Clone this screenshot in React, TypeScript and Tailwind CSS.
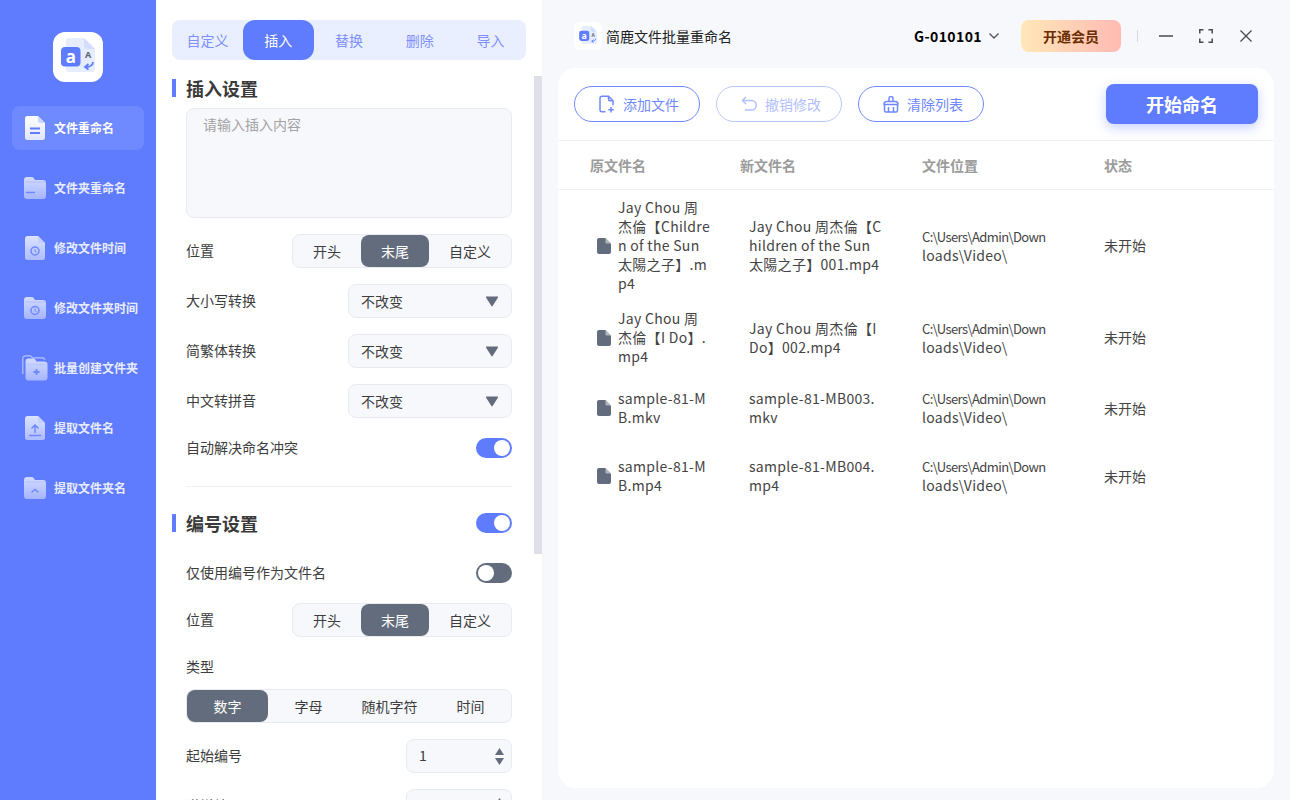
import React from "react";

const FONT = "font-['Noto_Sans_CJK_SC','Noto_Sans',sans-serif]";

function LogoMark({ size }: { size: number }) {
  return (
    <svg width={size} height={size} viewBox="0 0 50 50">
      <path d="M13 9a3 3 0 0 1 3-3h15l11 11v20a3 3 0 0 1-3 3H16a3 3 0 0 1-3-3z" fill="#e6edff" />
      <path d="M31 6l11 11H34a3 3 0 0 1-3-3z" fill="#d3deff" />
      <rect x="8" y="15" width="19.500" height="19.500" rx="4" fill="#5f7cff" />
      <text x="17.800" y="31" textAnchor="middle" fontSize="17" fontWeight="700" fill="#fff" fontFamily="Noto Sans">a</text>
      <text x="35" y="26" textAnchor="middle" fontSize="9" fontWeight="700" fill="#5d6679" fontFamily="Noto Sans">A</text>
      <path d="M40 30c-.3 3.500-3 5-7.500 5.200M35.500 32l-3.500 3 3.500 2.600" fill="none" stroke="#5f7cff" strokeWidth="1.800" />
    </svg>
  );
}

function DocIcon({ children }: { children?: React.ReactNode }) {
  return (
    <svg width="20" height="24" viewBox="0 0 20 24">
      <defs>
        <linearGradient id="docG" x1="0" y1="0" x2="0" y2="1">
          <stop offset="0" stopColor="#dbe3ff" />
          <stop offset="1" stopColor="#aebcff" />
        </linearGradient>
      </defs>
      <path d="M0 2.500A2.500 2.500 0 0 1 2.500 0H13l7 7v14.500a2.500 2.500 0 0 1-2.500 2.500h-15A2.500 2.500 0 0 1 0 21.500z" fill="url(#docG)" />
      <path d="M13 0l7 7h-5a2 2 0 0 1-2-2z" fill="#c3cfff" />
      {children}
    </svg>
  );
}

function FolderIcon({ children }: { children?: React.ReactNode }) {
  return (
    <svg width="22" height="22" viewBox="0 0 22 22">
      <defs>
        <linearGradient id="folG" x1="0" y1="0" x2="0" y2="1">
          <stop offset="0" stopColor="#d3dcff" />
          <stop offset="1" stopColor="#a5b5ff" />
        </linearGradient>
      </defs>
      <path d="M0 3a3 3 0 0 1 3-3h4.500a3 3 0 0 1 2.200 1l1.300 2h8a3 3 0 0 1 3 3v13a3 3 0 0 1-3 3H3a3 3 0 0 1-3-3z" fill="url(#folG)" />
      <path d="M2 5h18" stroke="#b9c6ff" strokeWidth="1.500" strokeLinecap="round" />
      {children}
    </svg>
  );
}

const clock = (cx: number, cy: number) => (
  <g fill="none" stroke="#6f88ff" strokeWidth="1.500">
    <circle cx={cx} cy={cy} r="4" />
    <path d={`M${cx} ${cy - 2}v2.200l1.500 1`} strokeWidth="1" />
  </g>
);

const menu: { label: string; icon: React.ReactNode; active?: boolean }[] = [
  {
    label: "文件重命名",
    active: true,
    icon: (
      <svg width="20" height="24" viewBox="0 0 20 24">
        <defs>
          <linearGradient id="docW" x1="0" y1="0" x2="0" y2="1">
            <stop offset="0" stopColor="#ffffff" />
            <stop offset="1" stopColor="#dfe5ff" />
          </linearGradient>
        </defs>
        <path d="M0 2.500A2.500 2.500 0 0 1 2.500 0H13l7 7v14.500a2.500 2.500 0 0 1-2.500 2.500h-15A2.500 2.500 0 0 1 0 21.500z" fill="url(#docW)" />
        <path d="M13 0l7 7h-5a2 2 0 0 1-2-2z" fill="#ccd6ff" />
        <path d="M5 12.500h10M5 17h10" stroke="#5f7cff" strokeWidth="1.800" />
      </svg>
    ),
  },
  { label: "文件夹重命名", icon: <FolderIcon><path d="M2.500 15.500h8" stroke="#6f88ff" strokeWidth="1.300" strokeLinecap="round" /></FolderIcon> },
  { label: "修改文件时间", icon: <DocIcon>{clock(10, 15)}</DocIcon> },
  { label: "修改文件夹时间", icon: <FolderIcon>{clock(11, 13.500)}</FolderIcon> },
  {
    label: "批量创建文件夹",
    icon: (
      <svg width="26" height="26" viewBox="0 0 26 26">
        <path d="M.8 19V3.500A2.700 2.700 0 0 1 3.500.8h5l2 2h9.500a3 3 0 0 1 3 2" fill="none" stroke="#b4c2ff" strokeWidth="1.200" />
        <g transform="translate(3.500 3.500)">
          <path d="M0 3a3 3 0 0 1 3-3h4.500a3 3 0 0 1 2.200 1l1.300 2h8a3 3 0 0 1 3 3v13a3 3 0 0 1-3 3H3a3 3 0 0 1-3-3z" fill="url(#folG)" />
          <path d="M2 6h18" stroke="#b9c6ff" strokeWidth="1.500" strokeLinecap="round" />
          <path d="M11 10.500v6M8 13.500h6" stroke="#6f88ff" strokeWidth="1.800" />
        </g>
      </svg>
    ),
  },
  { label: "提取文件名", icon: <DocIcon><path d="M10 16.500v-7M7 12l3-3 3 3M4.500 19.500h11" fill="none" stroke="#6f88ff" strokeWidth="1.500" strokeLinecap="round" /></DocIcon> },
  { label: "提取文件夹名", icon: <FolderIcon><path d="M8 15l3-2.500 3 2.500" fill="none" stroke="#6f88ff" strokeWidth="1.500" strokeLinecap="round" /></FolderIcon> },
];

function Segment({ items, active, className }: { items: { t: string; w: string }[]; active: number; className: string }) {
  return (
    <div className={`flex h-[34px] items-stretch rounded-lg border border-[#e9ebf2] bg-[#f7f8fc] text-sm text-[#3d3d3d] ${className}`}>
      {items.map((it, i) => (
        <div
          key={it.t}
          className={`flex items-center justify-center ${it.w} ${i === active ? "rounded-lg bg-[#636c7c] text-white" : ""}`}
        >
          {it.t}
        </div>
      ))}
    </div>
  );
}

const posItems = [
  { t: "开头", w: "w-[68px]" },
  { t: "末尾", w: "w-[68px]" },
  { t: "自定义", w: "flex-1" },
];
const typeItems = [
  { t: "数字", w: "w-[81px]" },
  { t: "字母", w: "w-[81px]" },
  { t: "随机字符", w: "w-[81px]" },
  { t: "时间", w: "w-[81px]" },
];

function Toggle({ on }: { on: boolean }) {
  return (
    <div className={`flex h-5 w-9 items-center rounded-full px-0.5 ${on ? "justify-end bg-[#5f7cff]" : "justify-start bg-[#636c7c]"}`}>
      <div className="size-4 rounded-full bg-white" />
    </div>
  );
}

function SectionTitle({ children }: { children: React.ReactNode }) {
  return (
    <div className="flex items-center gap-2.5">
      <div className="h-[18px] w-1 bg-[#5f7cff]" />
      <div className="text-[18px] font-bold leading-[18px] text-[#3a3a3a]">{children}</div>
    </div>
  );
}

function Label({ children }: { children: React.ReactNode }) {
  return <span className="pb-0.5 text-sm text-[#3d3d3d]">{children}</span>;
}

function SelectRow({ label }: { label: string }) {
  return (
    <div className="flex h-[34px] items-center justify-between pl-3.5">
      <Label>{label}</Label>
      <div className="flex h-[34px] w-[164px] items-center justify-between rounded-lg border border-[#e9ebf2] bg-[#f7f8fc] pl-3 pr-3 text-sm text-[#3d3d3d]">
        <span>不改变</span>
        <svg width="14" height="11" viewBox="0 0 14 11"><path d="M1 1.500a.7.7 0 0 1 .6-1h10.800a.7.7 0 0 1 .6 1L7.600 10a.7.7 0 0 1-1.200 0z" fill="#636c7c" /></svg>
      </div>
    </div>
  );
}

function NumberRow({ label, value }: { label: string; value: string }) {
  return (
    <div className="flex h-[34px] items-center justify-between pl-3.5">
      <Label>{label}</Label>
      <div className="flex h-[34px] w-[106px] items-center justify-between rounded-lg border border-[#e9ebf2] bg-[#f7f8fc] pl-3 pr-[7px] text-sm text-[#3d3d3d]">
        <span className="pb-0.5">{value}</span>
        <div className="flex flex-col gap-[3px]">
          <svg width="9" height="7" viewBox="0 0 9 7"><path d="M4.500 0L9 7H0z" fill="#636c7c" /></svg>
          <svg width="9" height="7" viewBox="0 0 9 7"><path d="M4.500 7L9 0H0z" fill="#636c7c" /></svg>
        </div>
      </div>
    </div>
  );
}

function Pill({ children, icon, muted }: { children: React.ReactNode; icon: React.ReactNode; muted?: boolean }) {
  return (
    <div className={`flex h-9 w-[126px] items-center justify-center gap-2 rounded-full border pl-1 text-sm ${muted ? "border-[#b9c6ff] text-[#b3c0ff]" : "border-[#6f88ff] text-[#6f88ff]"}`}>
      {icon}
      <span>{children}</span>
    </div>
  );
}

const rows = [
  { name: "Jay Chou 周杰倫【Children of the Sun 太陽之子】.mp4", next: "Jay Chou 周杰倫【Children of the Sun 太陽之子】001.mp4" },
  { name: "Jay Chou 周杰倫【I Do】.mp4", next: "Jay Chou 周杰倫【I Do】002.mp4" },
  { name: "sample-81-MB.mkv", next: "sample-81-MB003.mkv" },
  { name: "sample-81-MB.mp4", next: "sample-81-MB004.mp4" },
];

export default function App() {
  return (
    <div className={`flex h-[800px] w-[1290px] overflow-hidden bg-[#f7f8fc] ${FONT}`}>
      <aside className="flex w-[156px] shrink-0 flex-col items-center bg-[#5f7cff]">
        <div className="mt-8 flex size-[50px] items-center justify-center rounded-xl bg-white">
          <LogoMark size={50} />
        </div>
        <nav className="mt-6 flex w-full flex-col gap-4 px-3">
          {menu.map((m) => (
            <div
              key={m.label}
              className={`flex h-11 items-center rounded-lg ${m.active ? "bg-white/10 text-white" : "text-[#e8ecff]"}`}
            >
              <div className="flex w-[42px] shrink-0 items-center justify-center pl-[3px]">{m.icon}</div>
              <span className="whitespace-nowrap text-xs font-bold">{m.label}</span>
            </div>
          ))}
        </nav>
      </aside>

      <section className="relative h-full w-[386px] shrink-0 overflow-hidden bg-white pl-4 pr-4 pt-5">
        <div className="flex h-10 w-[354px] items-stretch rounded-lg bg-[#e9efff] text-sm text-[#7f8fff]">
          {["自定义", "插入", "替换", "删除", "导入"].map((t, i) => (
            <div key={t} className={`flex w-[71px] items-center justify-center ${i === 1 ? "rounded-xl bg-[#5f7cff] text-white" : ""}`}>
              {t}
            </div>
          ))}
        </div>
        <div className="absolute right-0 top-[76px] h-[478px] w-2 bg-[#dfdfe9]" />

        <div className="mt-[19px] w-[340px]">
          <SectionTitle>插入设置</SectionTitle>
          <div className="ml-3.5 mt-[11px] h-[110px] rounded-lg border border-[#e9ebf2] bg-[#f7f8fc] px-4 py-[5px] text-sm text-[#a3a3a3]">请输入插入内容</div>

          <div className="mt-4 flex h-[34px] items-center justify-between pl-3.5">
            <Label>位置</Label>
            <Segment items={posItems} active={1} className="w-[220px]" />
          </div>
          <div className="mt-4 flex flex-col gap-4">
            <SelectRow label="大小写转换" />
            <SelectRow label="简繁体转换" />
            <SelectRow label="中文转拼音" />
          </div>
          <div className="mt-5 flex h-5 items-center justify-between pl-3.5">
            <Label>自动解决命名冲突</Label>
            <Toggle on />
          </div>
          <div className="ml-3.5 mt-7 h-px bg-[#eff0f4]" />

          <div className="mt-[26px] flex h-5 items-center justify-between">
            <SectionTitle>编号设置</SectionTitle>
            <Toggle on />
          </div>
          <div className="mt-[30px] flex h-5 items-center justify-between pl-3.5">
            <Label>仅使用编号作为文件名</Label>
            <Toggle on={false} />
          </div>
          <div className="mt-5 flex h-[34px] items-center justify-between pl-3.5">
            <Label>位置</Label>
            <Segment items={posItems} active={1} className="w-[220px]" />
          </div>
          <div className="ml-3.5 mt-[19px] pb-px text-sm leading-[20px] text-[#3d3d3d]">类型</div>
          <div className="ml-3.5 mt-3">
            <Segment items={typeItems} active={0} className="w-[326px]" />
          </div>
          <div className="mt-4 flex flex-col gap-4">
            <NumberRow label="起始编号" value="1" />
            <NumberRow label="递增编号" value="1" />
          </div>
        </div>
      </section>

      <main className="flex min-w-0 flex-1 flex-col pl-4 pr-4">
        <header className="flex h-[68px] shrink-0 items-center pl-4 pr-[22px] pt-1">
          <div className="flex size-7 items-center justify-center rounded-md bg-white">
            <LogoMark size={26} />
          </div>
          <span className="ml-1 text-sm text-[#222]">简鹿文件批量重命名</span>
          <span className="ml-auto text-sm font-bold tracking-[0.4px] text-black">G-010101</span>
          <svg className="ml-[6px]" width="12" height="8" viewBox="0 0 12 8"><path d="M1.500 1.500L6 6l4.500-4.500" fill="none" stroke="#555" strokeWidth="1.400" /></svg>
          <div className="ml-[21px] flex h-8 w-[100px] items-center justify-center rounded-lg bg-gradient-to-r from-[#ffe7b8] to-[#ffbab3] text-sm font-bold text-[#6b2e00]">开通会员</div>
          <div className="ml-4 h-3 w-px bg-[#d8d8d8]" />
          <svg className="ml-[21px]" width="14" height="14" viewBox="0 0 14 14"><path d="M0 7h14" stroke="#4a4a4a" strokeWidth="1.500" /></svg>
          <svg className="ml-[26px]" width="14" height="14" viewBox="0 0 14 14"><path d="M.8 4.500V.8h3.700M9.500.8h3.700v3.700M13.200 9.500v3.700H9.500M4.500 13.200H.8V9.500" fill="none" stroke="#4a4a4a" strokeWidth="1.500" /></svg>
          <svg className="ml-[27px]" width="12" height="12" viewBox="0 0 12 12"><path d="M.5.500l11 11M11.500.500l-11 11" fill="none" stroke="#4a4a4a" strokeWidth="1.300" /></svg>
        </header>

        <div className="flex h-[720px] flex-col overflow-hidden rounded-[18px] bg-white">
          <div className="flex h-[73px] shrink-0 items-center border-b border-[#eff0f4] px-4">
            <div className="flex gap-4">
              <Pill icon={<svg width="16" height="18" viewBox="0 0 16 18"><path d="M6.500 16.800H3A2 2 0 0 1 1 14.800V3.200a2 2 0 0 1 2-2h6.500L14 5.700v4.500M9.500 1.200v3a1.500 1.500 0 0 0 1.500 1.500h3M12 12v5.500M9.300 14.700h5.500" fill="none" stroke="#6f88ff" strokeWidth="1.500" /></svg>}>添加文件</Pill>
              <Pill muted icon={<svg width="16" height="16" viewBox="0 0 16 16"><path d="M5 1L1.500 4.500 5 8M1.500 4.500h9a4 4 0 0 1 0 9.500H4" fill="none" stroke="#b3c0ff" strokeWidth="1.500" /></svg>}>撤销修改</Pill>
              <Pill icon={<svg width="16" height="17" viewBox="0 0 16 17"><path d="M1.500 8.500h13v6a1.500 1.500 0 0 1-1.500 1.500H3a1.500 1.500 0 0 1-1.500-1.500zM1 8.500a2.500 2.500 0 0 1 2.500-3h9a2.500 2.500 0 0 1 2.500 3M6 5.500v-3a2 2 0 0 1 4 0v3M5.500 11v5M10.500 11v5" fill="none" stroke="#6f88ff" strokeWidth="1.500" /></svg>}>清除列表</Pill>
            </div>
            <div className="ml-auto flex h-10 w-[152px] items-center justify-center rounded-lg bg-[#5f7cff] text-[18px] font-bold text-white shadow-[0_4px_12px_rgba(95,124,255,0.35)]">开始命名</div>
          </div>

          <div className="grid h-[49px] shrink-0 grid-cols-[150px_182px_182px_1fr] items-center border-b border-[#eff0f4] pl-8 text-sm font-bold text-[#9b9b9b]">
            <span>原文件名</span>
            <span>新文件名</span>
            <span>文件位置</span>
            <span>状态</span>
          </div>

          {rows.map((r) => (
            <div key={r.name} className="grid min-h-[68px] grid-cols-[150px_182px_182px_1fr] items-center py-2 pl-8 text-sm leading-[19px] tracking-[0.3px] text-[#444]">
              <div className="flex items-center">
                <svg className="ml-[7px] shrink-0" width="14" height="16" viewBox="0 0 14 16"><path d="M0 2a2 2 0 0 1 2-2h6.500L14 5.500V14a2 2 0 0 1-2 2H2a2 2 0 0 1-2-2z" fill="#636c7c" /><path d="M8.500 0L14 5.500H9.500a1 1 0 0 1-1-1z" fill="#fff" fillOpacity="0.5" /></svg>
                <span className="ml-[7px] w-[93px] break-all">{r.name}</span>
              </div>
              <span className="ml-[9px] w-[134px] break-all">{r.next}</span>
              <div className="whitespace-nowrap">
                <span className="block text-[13px] tracking-[-0.6px]">C:\Users\Admin\Down</span>
                <span className="block">loads\Video\</span>
              </div>
              <span className="tracking-normal">未开始</span>
            </div>
          ))}
        </div>
      </main>
    </div>
  );
}
